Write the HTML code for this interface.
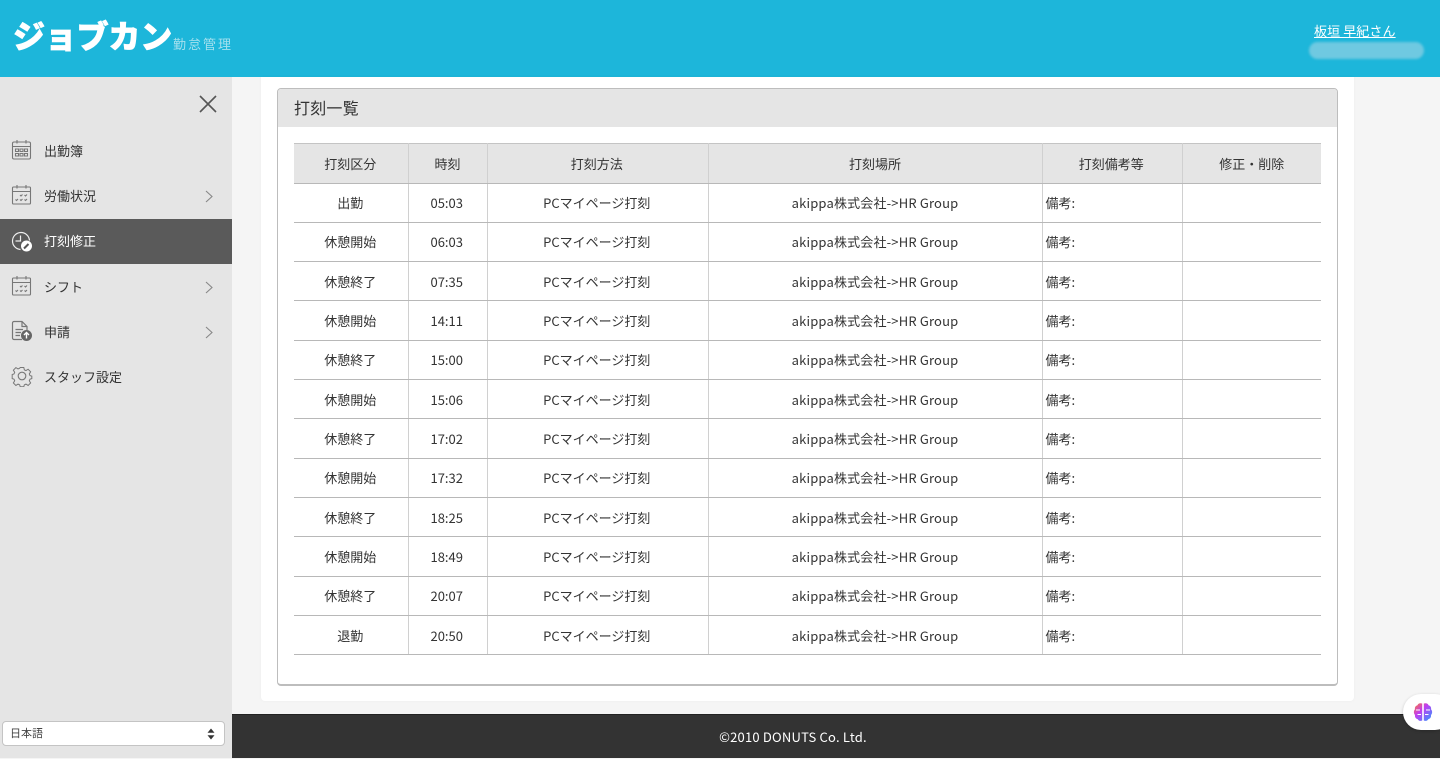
<!DOCTYPE html>
<html lang="ja"><head><meta charset="utf-8"><title>打刻一覧</title>
<style>
*{box-sizing:border-box}
html,body{margin:0;padding:0;width:1440px;height:758px;overflow:hidden;background:#f5f5f5;font-family:"Noto Sans CJK JP","Liberation Sans",sans-serif;color:#333}
.abs{position:absolute}
#hdr{left:0;top:0;width:1440px;height:77px;background:#1db6da}
#logo{left:13px;top:11px;font-size:32px;line-height:48px;font-weight:900;color:#fff;letter-spacing:-.2px;white-space:nowrap;-webkit-text-stroke:.7px #fff}
#sub{left:173px;top:35px;font-size:13px;line-height:18px;color:#a5e0ee;letter-spacing:2px;white-space:nowrap}
#user{left:1314px;top:21px;font-size:13px;line-height:20px;color:#fff;text-decoration:underline;white-space:nowrap;letter-spacing:.1px}
#blob{left:1309px;top:42px;width:115px;height:17px;border-radius:9px;background:#6fc9e1;filter:blur(1.2px)}
#side{left:0;top:77px;width:232px;height:681px;background:#e5e5e5}
.mi{position:absolute;left:0;width:232px;height:45px;font-size:13px;line-height:45px;color:#333;padding-left:44px}
.mi.on{background:#5a5a5a;color:#fff;line-height:44px}
.mi svg{position:absolute;left:11px;top:11px}
.mi svg.ch{position:absolute;left:205px;top:17px}
#sel{left:2px;top:721px;width:223px;height:25px;background:#fff;border:1px solid #c4c4c4;border-radius:4px;font-size:11px;line-height:23px;padding-left:7px;color:#444}
#card{left:261px;top:77px;width:1093px;height:624px;background:#fff;border-radius:0 0 4px 4px;box-shadow:0 0 3px rgba(0,0,0,.04)}
#panel{left:277px;top:88px;width:1061px;height:598px;background:#fff;border:1px solid #bdbdbd;border-bottom-width:2px;border-radius:4px;overflow:hidden}
#phead{left:0;top:0;width:100%;height:38px;background:#e5e5e5;font-size:16px;line-height:36px;padding-left:16px;color:#333;letter-spacing:.2px}
table{position:absolute;left:293px;top:142px;width:1028px;border-collapse:collapse;table-layout:fixed;font-size:13px;color:#333;clip-path:inset(1px 0 0 1px)}
th{background:#e5e5e5;font-weight:400;height:41px;border-bottom:1px solid #b8b8b8;border-left:1px solid #d0d0d0;text-align:center;padding:2px 0 0;box-shadow:inset 0 2px #c4c4c4}
td{height:39.33px;border-bottom:1px solid #b8b8b8;border-left:1px solid #d0d0d0;text-align:center;padding:0;white-space:nowrap}
td.a{letter-spacing:.17px}
th:first-child,td:first-child{border-left:0}
td:nth-child(2),td:nth-child(3),th:nth-child(3),th:nth-child(5){padding-right:1.500px}
td.l{text-align:left;padding-left:3px}
#foot{left:232px;top:715px;width:1122px;height:44px;color:#fff;font-size:13px;line-height:44px;text-align:center;letter-spacing:.2px}
#footbg{left:232px;top:714px;width:1208px;height:44px;background:#333;border-top:1px solid #222}
#bub{left:1403px;top:694px;width:50px;height:36px;border-radius:18px;background:#fff;box-shadow:0 1px 3px rgba(0,0,0,.2)}
</style></head><body>
<div class="abs" id="hdr"></div>
<div class="abs" id="logo">ジョブカン</div>
<div class="abs" id="sub">勤怠管理</div>
<div class="abs" id="user">板垣 早紀さん</div>
<div class="abs" id="blob"></div>

<div class="abs" id="side">
<svg class="abs" style="left:198px;top:17px" width="20" height="20" viewBox="0 0 20 20"><path d="M2 2L18 18M18 2L2 18" stroke="#555" stroke-width="1.6" fill="none"/></svg>
<div class="mi" style="top:51px"><svg width="22" height="22" viewBox="0 0 22 22" fill="none" stroke="#777" stroke-width="1.1"><rect x="1.5" y="3" width="18" height="17" rx="1.5"/><path d="M1.5 7.5H19.5M6 1V4.5M15 1V4.5"/><path d="M4.5 10h3v2.5h-3zM9 10h3v2.5H9zM13.5 10h3v2.5h-3zM4.500 14.500h3V17h-3zM9 14.500h3V17H9zM13.500 14.500h3V17h-3z"/></svg>出勤簿</div>
<div class="mi" style="top:96px"><svg width="22" height="22" viewBox="0 0 22 22" fill="none" stroke="#777" stroke-width="1.1"><rect x="1.500" y="3" width="18" height="17" rx="1"/><path d="M1.500 7.500H19.500M6 1V4.500M15 1V4.500"/><path d="M9 11l1 1 1.500-1.500M13.500 11l1 1 1.500-1.500M4.500 15.500l1 1L7 15M9 15.500l1 1 1.500-1.500M13.500 15.500l1 1 1.500-1.500"/></svg>労働状況<svg class="ch" width="9" height="13" viewBox="0 0 9 13"><path d="M1 1L7 6.500L1 12" fill="none" stroke="#888" stroke-width="1.1"/></svg></div>
<div class="mi on" style="top:142px"><svg style="left:10px" width="24" height="24" viewBox="0 0 24 24" fill="none" stroke="#eee" stroke-width="1.2"><path d="M10.500 19.500A8.500 8.500 0 1 1 19.500 10.500"/><path d="M10.500 5.500V11H5.500"/><circle cx="16.500" cy="16" r="5.500" fill="#fff" stroke="none"/><path d="M14 18.500L18.500 14" stroke="#555" stroke-width="2"/></svg>打刻修正</div>
<div class="mi" style="top:187px"><svg style="top:11px" width="22" height="22" viewBox="0 0 22 22" fill="none" stroke="#777" stroke-width="1.100"><rect x="1.500" y="3" width="18" height="17" rx="1"/><path d="M1.500 7.500H19.500M6 1V4.500M15 1V4.500"/><path d="M9 11l1 1 1.500-1.500M13.500 11l1 1 1.500-1.500M4.500 15.500l1 1L7 15M9 15.500l1 1 1.500-1.500M13.500 15.500l1 1 1.500-1.500"/></svg>シフト<svg class="ch" width="9" height="13" viewBox="0 0 9 13"><path d="M1 1L7 6.500L1 12" fill="none" stroke="#888" stroke-width="1.100"/></svg></div>
<div class="mi" style="top:232px"><svg width="24" height="24" viewBox="0 0 24 24" fill="none" stroke="#777" stroke-width="1.200"><path d="M11 19.500H3a1.500 1.500 0 0 1-1.500-1.500V3A1.500 1.500 0 0 1 3 1.500H11L16 6.500V10"/><path d="M11 1.500V6.500H16M4.500 9.500H12M4.500 12.500H10M4.500 15.500H9"/><circle cx="15.500" cy="15.500" r="5.500" fill="#666" stroke="none"/><path d="M15.500 18.500V12.500M13 15L15.500 12.500L18 15" stroke="#fff" stroke-width="1.400"/></svg>申請<svg class="ch" width="9" height="13" viewBox="0 0 9 13"><path d="M1 1L7 6.500L1 12" fill="none" stroke="#888" stroke-width="1.100"/></svg></div>
<div class="mi" style="top:277px"><svg width="22" height="22" viewBox="0 0 22 22" fill="none" stroke="#777" stroke-width="1.100"><circle cx="11" cy="11" r="3.800"/><path d="M9 1.500h4l.6 2.700 1.800.8 2.400-1.500 2.800 2.800-1.500 2.400.8 1.800 2 .6v2.800l-2 .6-.8 1.800 1.500 2.400-2.800 2.800-2.400-1.500-1.800.8-.6 2.100H9l-.6-2.100-1.800-.8-2.400 1.500-2.800-2.800 1.500-2.400-.8-1.800-2-.6V9.300l2-.6.8-1.800-1.500-2.400 2.800-2.800 2.400 1.500 1.800-.8z" transform="translate(1.100 1.100) scale(.9)"/></svg>スタッフ設定</div>
</div>
<div class="abs" id="sel">日本語<svg class="abs" style="left:203px;top:6px" width="10" height="12" viewBox="0 0 10 12"><path d="M5 .5L8.500 4.800H1.500zM5 11.500L1.500 7.200H8.500z" fill="#333"/></svg></div>

<div class="abs" id="card"></div>
<div class="abs" id="panel"><div class="abs" id="phead">打刻一覧</div></div>
<table>
<colgroup><col style="width:115px"><col style="width:79px"><col style="width:221px"><col style="width:334px"><col style="width:140px"><col style="width:139px"></colgroup>
<tr><th>打刻区分</th><th>時刻</th><th>打刻方法</th><th>打刻場所</th><th>打刻備考等</th><th>修正・削除</th></tr>
<tr><td>出勤</td><td>05:03</td><td>PCマイページ打刻</td><td class="a">akippa株式会社-&gt;HR Group</td><td class="l">備考:</td><td></td></tr>
<tr><td>休憩開始</td><td>06:03</td><td>PCマイページ打刻</td><td class="a">akippa株式会社-&gt;HR Group</td><td class="l">備考:</td><td></td></tr>
<tr><td>休憩終了</td><td>07:35</td><td>PCマイページ打刻</td><td class="a">akippa株式会社-&gt;HR Group</td><td class="l">備考:</td><td></td></tr>
<tr><td>休憩開始</td><td>14:11</td><td>PCマイページ打刻</td><td class="a">akippa株式会社-&gt;HR Group</td><td class="l">備考:</td><td></td></tr>
<tr><td>休憩終了</td><td>15:00</td><td>PCマイページ打刻</td><td class="a">akippa株式会社-&gt;HR Group</td><td class="l">備考:</td><td></td></tr>
<tr><td>休憩開始</td><td>15:06</td><td>PCマイページ打刻</td><td class="a">akippa株式会社-&gt;HR Group</td><td class="l">備考:</td><td></td></tr>
<tr><td>休憩終了</td><td>17:02</td><td>PCマイページ打刻</td><td class="a">akippa株式会社-&gt;HR Group</td><td class="l">備考:</td><td></td></tr>
<tr><td>休憩開始</td><td>17:32</td><td>PCマイページ打刻</td><td class="a">akippa株式会社-&gt;HR Group</td><td class="l">備考:</td><td></td></tr>
<tr><td>休憩終了</td><td>18:25</td><td>PCマイページ打刻</td><td class="a">akippa株式会社-&gt;HR Group</td><td class="l">備考:</td><td></td></tr>
<tr><td>休憩開始</td><td>18:49</td><td>PCマイページ打刻</td><td class="a">akippa株式会社-&gt;HR Group</td><td class="l">備考:</td><td></td></tr>
<tr><td>休憩終了</td><td>20:07</td><td>PCマイページ打刻</td><td class="a">akippa株式会社-&gt;HR Group</td><td class="l">備考:</td><td></td></tr>
<tr><td>退勤</td><td>20:50</td><td>PCマイページ打刻</td><td class="a">akippa株式会社-&gt;HR Group</td><td class="l">備考:</td><td></td></tr>
</table>

<div class="abs" id="footbg"></div>
<div class="abs" id="foot">©2010 DONUTS Co. Ltd.</div>
<div class="abs" id="bub"><svg class="abs" style="left:10px;top:8px" width="20" height="20" viewBox="0 0 20 20"><defs><linearGradient id="g" x1="0" y1="0" x2="1" y2="1"><stop offset="0" stop-color="#ff7a2f"/><stop offset=".4" stop-color="#c23cf0"/><stop offset="1" stop-color="#2f9bff"/></linearGradient></defs><path d="M9.200 1.500C7 .8 5 1.500 4.500 3.200 2.500 3.700 1.500 5.500 2 7.300.5 8.800.5 11.500 2 13c-.3 2 .8 3.800 2.800 4.200.7 1.500 2.800 2.200 4.400 1.300zM10.800 1.500C13 .8 15 1.500 15.500 3.200c2 .5 3 2.300 2.500 4.100 1.500 1.500 1.500 4.200 0 5.700.3 2-.8 3.800-2.800 4.200-.7 1.500-2.800 2.200-4.400 1.300z" fill="url(#g)"/><path d="M3 8H7M4.500 12.500H8M13 8H17M12 12.500H15.500" stroke="#fff" stroke-width="1"/></svg></div>
</body></html>
